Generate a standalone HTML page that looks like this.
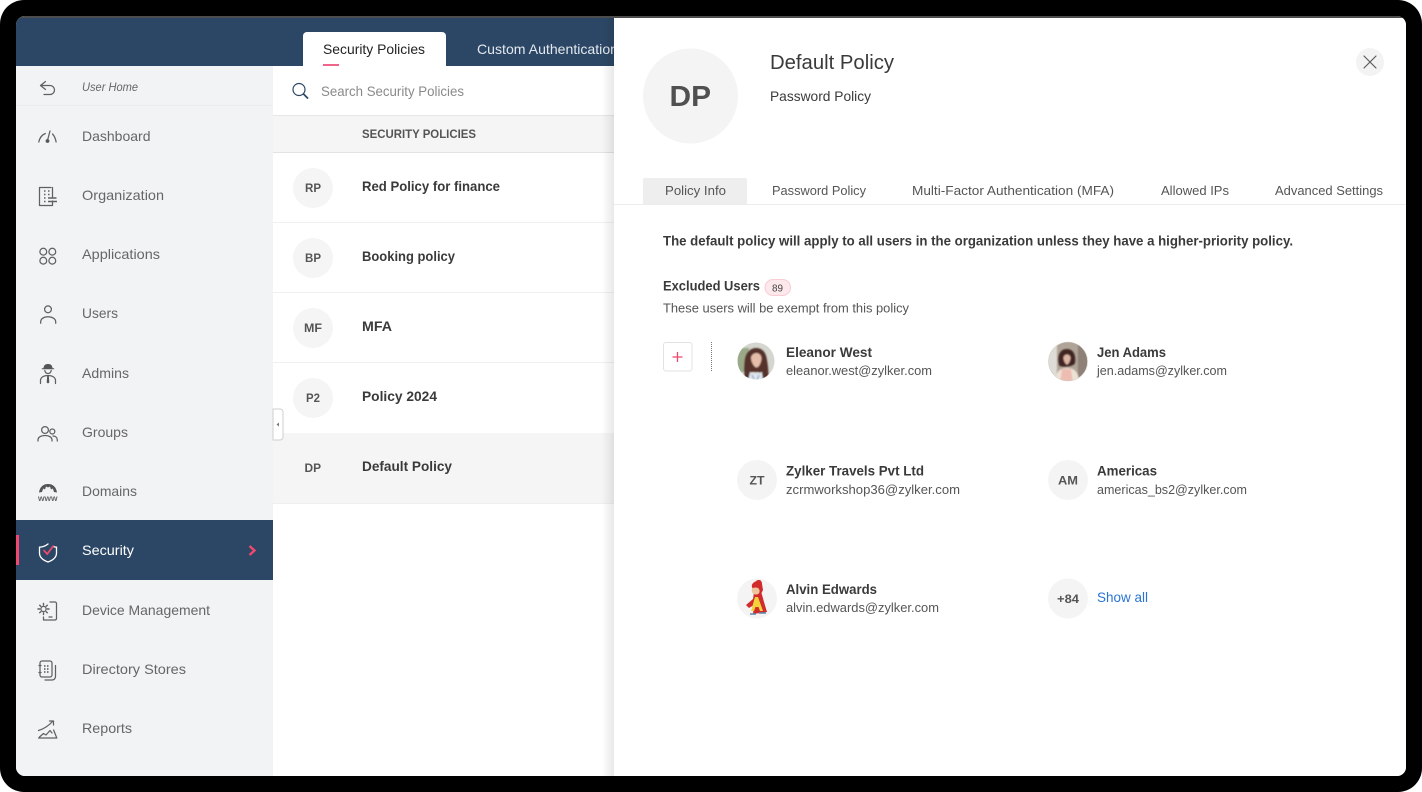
<!DOCTYPE html>
<html lang="en"><head><meta charset="utf-8"><title>Security Policies</title>
<style>
html,body{margin:0;padding:0;background:#fff;width:1422px;height:792px;overflow:hidden}
svg{display:block}
text{font-family:"Liberation Sans",sans-serif;font-size:14px;fill:#666}
.b{font-weight:bold;fill:#3a3a3a}
.ic{fill:none;stroke:#606060;stroke-width:1.250;stroke-linecap:round;stroke-linejoin:round}
.n{fill:#3a3a3a;font-weight:bold}
.m{fill:#555}
</style></head><body>
<svg width="1422" height="792" viewBox="0 0 1422 792" xmlns="http://www.w3.org/2000/svg">
<defs>
<clipPath id="scr"><rect x="16" y="16" width="1390" height="760" rx="9"/></clipPath>
<clipPath id="tabc"><rect x="273" y="18" width="341" height="48"/></clipPath>
<linearGradient id="sh" x1="0" x2="1" y1="0" y2="0"><stop offset="0" stop-color="#000" stop-opacity="0"/><stop offset="1" stop-color="#000" stop-opacity=".09"/></linearGradient>
<clipPath id="a1"><circle cx="756" cy="361" r="18.5"/></clipPath>
<clipPath id="a2"><circle cx="1068" cy="361.500" r="19.500"/></clipPath>
<filter id="bl" x="-20%" y="-20%" width="140%" height="140%"><feGaussianBlur stdDeviation=".7"/></filter>
</defs>
<rect x="0" y="0" width="1422" height="792" rx="24" fill="#000"/>
<g clip-path="url(#scr)">
<rect x="16" y="16" width="1390" height="760" fill="#fff"/>
<rect x="16" y="16" width="1390" height="2" fill="#4c4c4c"/>
<rect x="16" y="18" width="598" height="48" fill="#2c4765"/>
<!-- sidebar -->
<rect x="16" y="66" width="257" height="710" fill="#f1f3f5"/>
<rect x="16" y="105" width="257" height="1" fill="#eaecee"/>
<rect x="16" y="520" width="257" height="60" fill="#2c4765"/>
<rect x="16" y="535" width="3" height="30" fill="#f0486e"/>
<text x="82" y="91" style="font-size:12px;font-style:italic" textLength="56" lengthAdjust="spacingAndGlyphs">User Home</text>
<text x="82" y="141" textLength="68.500" lengthAdjust="spacingAndGlyphs">Dashboard</text>
<text x="82" y="200" textLength="82" lengthAdjust="spacingAndGlyphs">Organization</text>
<text x="82" y="259" textLength="78" lengthAdjust="spacingAndGlyphs">Applications</text>
<text x="82" y="318" textLength="36" lengthAdjust="spacingAndGlyphs">Users</text>
<text x="82" y="378" textLength="47" lengthAdjust="spacingAndGlyphs">Admins</text>
<text x="82" y="437" textLength="46" lengthAdjust="spacingAndGlyphs">Groups</text>
<text x="82" y="496" textLength="55" lengthAdjust="spacingAndGlyphs">Domains</text>
<text x="82" y="555" style="fill:#fff" textLength="52" lengthAdjust="spacingAndGlyphs">Security</text>
<text x="82" y="615" textLength="128" lengthAdjust="spacingAndGlyphs">Device Management</text>
<text x="82" y="674" textLength="104" lengthAdjust="spacingAndGlyphs">Directory Stores</text>
<text x="82" y="733" textLength="50" lengthAdjust="spacingAndGlyphs">Reports</text>
<path d="M249.500 546l5 4.500-5 4.500" fill="none" stroke="#f0486e" stroke-width="2.400"/>
<!-- icons -->
<path class="ic" d="M45.500 81.500l-5 4 5 4M40.500 85.500h9.500a4 4 0 0 1 0 9h-6"/>
<path class="ic" d="M38.800 142c.8-4 3-7 6.500-8.500M52.500 134c1.800 1.800 3 4.500 3.600 8M47.600 140L50 131"/><circle cx="47.500" cy="141" r="1.900" fill="#555"/>
<path class="ic" d="M51 187.500H39.500v18H52.500V201M52.500 187.500V197"/><path d="M44 191h1.500M48 191h1.500M44 194.500h1.500M48 194.500h1.500M44 198h1.500M44 201.500h1.500" stroke="#606060" stroke-width="1.500"/><path d="M48 198h8.500M48 201.500h9" stroke="#606060" stroke-width="1.400"/>
<g class="ic"><circle cx="43.300" cy="251.700" r="3.400"/><circle cx="52.300" cy="251.700" r="3.400"/><circle cx="43.300" cy="260.700" r="3.400"/><circle cx="52.300" cy="260.700" r="3.400"/></g>
<g class="ic"><circle cx="48" cy="309.300" r="3.400"/><path d="M40.700 323.300v-1.500c0-3 3-5 7.300-5s7.700 2 7.700 5v1.500"/></g>
<path d="M43.500 368.200c.3-3 1.800-4.200 4.500-4.200s4.200 1.200 4.500 4.200h1.600v1h-12.300v-1z" fill="#555"/>
<g class="ic"><path d="M44.800 370.500c.4 2 1.600 3 3.200 3s2.800-1 3.200-3M40.500 383.500v-3c0-3 3-5 7.500-5s7.500 2 7.500 5v3"/></g><path d="M47.200 375.500h1.600l.5 7-1.300 1-1.300-1z" fill="#555"/>
<g class="ic"><circle cx="45" cy="430" r="3.400"/><circle cx="52.300" cy="431.500" r="2.500"/><path d="M38 441v-1c0-2.800 3-4.500 7-4.500s7 1.700 7 4.500v1M53 436c2.500 0 4.300 1.500 4.300 4v1"/></g>
<path d="M39 492.500c.8-5.500 4-8.500 9-8.500s8.200 3 9 8.500l-3-.5-1.200-3.500-1.800 1-1-3-2 1-2-1-1 3-1.800-1-1.200 3.500z" fill="#555"/>
<text x="38" y="501" style="font-size:8px;font-weight:bold" textLength="19.500" lengthAdjust="spacingAndGlyphs">www</text>
<path d="M48 544c-2.500 2-5.500 3-8.500 3.200v5.800c0 4.200 3.500 7.200 8.500 9 5-1.800 8.500-4.800 8.500-9v-5.800c-1-.1-2-.3-3-.6" fill="none" stroke="#fff" stroke-width="1.300" stroke-linecap="round"/>
<path d="M44 550.500l3.200 3.500 6-8" fill="none" stroke="#f0486e" stroke-width="1.700" stroke-linecap="round"/>
<g class="ic"><circle cx="43.500" cy="609" r="2.600"/><path d="M43.500 603.500v1.600M43.500 612.900v1.600M38 609h1.600M47.400 609H49M39.700 605.200l1.100 1.100M46.200 611.700l1.100 1.100M39.700 612.800l1.100-1.100M46.200 606.300l1.100-1.100" style="stroke-width:1.400"/><path d="M50 602h5a1.500 1.500 0 0 1 1.500 1.500v15a1.500 1.500 0 0 1-1.500 1.500H43.500v-3M49 617h3"/></g>
<g class="ic"><rect x="40" y="661" width="12" height="16" rx="2"/><path d="M55.500 665.500v11c0 2-1.500 3.500-3.500 3.500h-7"/><path d="M39 665.500h2M39 672.500h2" /></g>
<path d="M44 666h1.500M47 666h1.500M44 669h1.500M47 669h1.500M44 672h1.500M47 672h1.500" stroke="#555" stroke-width="1.500"/>
<g class="ic"><path d="M38.500 730.500c5-1.500 10-4.500 14.500-9.500M49.500 721h4v4M39.500 737l4-3.500 2.500 1.500 4-4.500 2 2.500M38.500 738h18.300l-3.200-8"/></g>
<!-- tabs -->
<g clip-path="url(#tabc)">
<text x="477" y="54" style="fill:#e3e8ee" textLength="141" lengthAdjust="spacingAndGlyphs">Custom Authentication</text>
</g>
<path d="M303 66V36a4 4 0 0 1 4-4h135a4 4 0 0 1 4 4v30z" fill="#fff"/>
<text x="323" y="54" style="fill:#222" textLength="102" lengthAdjust="spacingAndGlyphs">Security Policies</text>
<rect x="323" y="64" width="16" height="2" fill="#f0648a"/>
<!-- list -->
<circle cx="299" cy="89.500" r="6" fill="none" stroke="#2c4765" stroke-width="1.200"/>
<path d="M303.500 94l4 4" stroke="#2c4765" stroke-width="1.800" stroke-linecap="round"/>
<text x="321" y="96" style="fill:#8a8a8a" textLength="143" lengthAdjust="spacingAndGlyphs">Search Security Policies</text>
<rect x="273" y="115" width="341" height="38" fill="#f5f5f5"/>
<rect x="273" y="115" width="341" height="1" fill="#e6e6e6"/>
<rect x="273" y="152" width="341" height="1" fill="#e2e2e2"/>
<text x="362" y="138" class="m" style="font-size:12px;font-weight:bold" textLength="114" lengthAdjust="spacingAndGlyphs">SECURITY POLICIES</text>
<rect x="273" y="222" width="341" height="1" fill="#f0f0f0"/>
<rect x="273" y="292" width="341" height="1" fill="#f0f0f0"/>
<rect x="273" y="362" width="341" height="1" fill="#f0f0f0"/>
<rect x="273" y="433" width="341" height="70" fill="#f5f5f5"/>
<rect x="273" y="503" width="341" height="1" fill="#efefef"/>
<g fill="#f5f5f5"><circle cx="313" cy="188" r="20"/><circle cx="313" cy="258" r="20"/><circle cx="313" cy="328" r="20"/><circle cx="313" cy="398" r="20"/></g>
<text x="305" y="192" class="m" style="font-size:12px;font-weight:bold" textLength="16" lengthAdjust="spacingAndGlyphs">RP</text>
<text x="305" y="262" class="m" style="font-size:12px;font-weight:bold" textLength="16" lengthAdjust="spacingAndGlyphs">BP</text>
<text x="304" y="332" class="m" style="font-size:12px;font-weight:bold" textLength="18" lengthAdjust="spacingAndGlyphs">MF</text>
<text x="306" y="402" class="m" style="font-size:12px;font-weight:bold" textLength="14" lengthAdjust="spacingAndGlyphs">P2</text>
<text x="304.500" y="472" class="m" style="font-size:12px;font-weight:bold" textLength="16.500" lengthAdjust="spacingAndGlyphs">DP</text>
<text x="362" y="191" class="b" textLength="138" lengthAdjust="spacingAndGlyphs">Red Policy for finance</text>
<text x="362" y="261" class="b" textLength="93" lengthAdjust="spacingAndGlyphs">Booking policy</text>
<text x="362" y="331" class="b" textLength="30" lengthAdjust="spacingAndGlyphs">MFA</text>
<text x="362" y="401" class="b" textLength="75" lengthAdjust="spacingAndGlyphs">Policy 2024</text>
<text x="362" y="471" class="b" textLength="90" lengthAdjust="spacingAndGlyphs">Default Policy</text>
<path d="M273 409h7a3 3 0 0 1 3 3v25a3 3 0 0 1-3 3h-7z" fill="#fff" stroke="#cfcfcf"/>
<path d="M279 422.500v4l-2.500-2z" fill="#777"/>
<!-- panel -->
<rect x="602" y="18" width="12" height="758" fill="url(#sh)"/>
<rect x="614" y="18" width="792" height="758" fill="#fff"/>
<circle cx="690.500" cy="96" r="47.500" fill="#f4f4f4"/>
<text x="669.500" y="106" style="font-size:29px;font-weight:bold;fill:#505050" textLength="41.500" lengthAdjust="spacingAndGlyphs">DP</text>
<text x="770" y="69" style="font-size:20px;fill:#3a3a3a" textLength="124" lengthAdjust="spacingAndGlyphs">Default Policy</text>
<text x="770" y="101" style="fill:#3a3a3a" textLength="101" lengthAdjust="spacingAndGlyphs">Password Policy</text>
<circle cx="1370" cy="62" r="14" fill="#f3f3f3"/>
<path d="M1364 56l12 12M1376 56l-12 12" stroke="#5c5c5c" stroke-width="1.200" stroke-linecap="round"/>
<path d="M643 204v-24a2 2 0 0 1 2-2h100a2 2 0 0 1 2 2v24z" fill="#eeeeee"/>
<rect x="614" y="204" width="792" height="1" fill="#ececec"/>
<text x="665" y="195" class="m" style="font-size:13px" textLength="61" lengthAdjust="spacingAndGlyphs">Policy Info</text>
<text x="772" y="195" class="m" style="font-size:13px" textLength="94" lengthAdjust="spacingAndGlyphs">Password Policy</text>
<text x="912" y="195" class="m" style="font-size:13px" textLength="202" lengthAdjust="spacingAndGlyphs">Multi-Factor Authentication (MFA)</text>
<text x="1161" y="195" class="m" style="font-size:13px" textLength="68" lengthAdjust="spacingAndGlyphs">Allowed IPs</text>
<text x="1275" y="195" class="m" style="font-size:13px" textLength="108" lengthAdjust="spacingAndGlyphs">Advanced Settings</text>
<text x="663" y="245.500" class="b" textLength="630" lengthAdjust="spacingAndGlyphs">The default policy will apply to all users in the organization unless they have a higher-priority policy.</text>
<text x="663" y="290.500" class="b" textLength="97" lengthAdjust="spacingAndGlyphs">Excluded Users</text>
<rect x="765" y="279.500" width="25.500" height="16" rx="8" fill="#fde8ec" stroke="#f9ccd6"/>
<text x="772" y="291.500" style="font-size:10px;fill:#444" textLength="11" lengthAdjust="spacingAndGlyphs">89</text>
<text x="663" y="312.500" class="m" style="font-size:13px" textLength="246" lengthAdjust="spacingAndGlyphs">These users will be exempt from this policy</text>
<rect x="663.500" y="342.500" width="28.500" height="28.500" rx="2.500" fill="#fff" stroke="#e2e2e2"/>
<path d="M677.500 352v10M672.500 357h10" stroke="#f0486e" stroke-width="1.300"/>
<path d="M711.500 342v29" stroke="#777" stroke-dasharray="1 1" stroke-width="1"/>
<!-- avatar 1 -->
<g clip-path="url(#a1)">
<rect x="737" y="342" width="38" height="38" fill="#d4d6cf"/>
<rect x="737" y="348" width="12" height="24" fill="#9aaa88" filter="url(#bl)"/>
<g filter="url(#bl)">
<path d="M745 380c-1-6-1-14 0-21 1-7 6-11 11-11 6 0 10 4 11 12 1 6 2 13 1 20h-6l-3-8h-7l-2 8z" fill="#54322a"/>
<path d="M751 358c0-3 3-5 5.500-5s5 2 5 5.500-2.500 9-5 9-5.500-6-5.500-9.500z" fill="#e6bda8"/>
<path d="M748 381l2-9 6 2 6-2 1 9z" fill="#dfe6ef"/>
<path d="M752 375l2 4M759 375l-2 5" stroke="#6f8fb0" stroke-width="1"/>
</g></g>
<!-- avatar 2 -->
<g clip-path="url(#a2)">
<rect x="1048" y="342" width="40" height="40" fill="#b0a397"/>
<rect x="1048" y="342" width="9" height="40" fill="#dfdbd6" filter="url(#bl)"/>
<rect x="1078" y="342" width="10" height="40" fill="#8d8178" filter="url(#bl)"/>
<g filter="url(#bl)">
<path d="M1059 365c-2-8 0-16 8-16 7 0 9 7 8 14-1 4-15 5-16 2z" fill="#3f2824"/>
<path d="M1063.500 358c0-2.500 2-3.500 3.500-3.500s3.500 1 3.500 3.500-2 6.500-3.500 6.500-3.500-4-3.500-6.500z" fill="#deb5a4"/>
<path d="M1055 383c0-9 3-15 12-15s12 6 12 15z" fill="#eee2d6"/>
<path d="M1062 369h9l2 14h-13z" fill="#edbdb2"/>
</g></g>
<circle cx="1068" cy="361.500" r="19.500" fill="none" stroke="#d5cfca" stroke-width=".6"/>
<!-- initials -->
<g fill="#f4f4f4"><circle cx="757" cy="480" r="20"/><circle cx="1068" cy="480" r="20"/><circle cx="1068" cy="598.500" r="20"/><circle cx="757" cy="598.500" r="20"/></g>
<text x="749.500" y="484.500" class="m" style="font-size:12px;font-weight:bold" textLength="15" lengthAdjust="spacingAndGlyphs">ZT</text>
<text x="1058" y="484.500" class="m" style="font-size:12px;font-weight:bold" textLength="20" lengthAdjust="spacingAndGlyphs">AM</text>
<text x="1057" y="603" class="m" style="font-size:12px;font-weight:bold" textLength="22" lengthAdjust="spacingAndGlyphs">+84</text>
<!-- chipmunk -->
<g>
<path d="M756 581c3-2 6-1 6 3l1 6-1.500 3 2.500 9 3 10-14 2 1-9-5 3-3-3 7-6 1-7-2-5c-1-3 2-5 4.500-6z" fill="#d22b2b"/>
<path d="M752 589c1-2 6-2 7 0s1 5-2.500 5.500-5.500-2.500-4.500-5.500z" fill="#eec69b"/>
<path d="M755 597l3 0 5 14-3 0-1.500-4h-3l-1.500 4-3 0z" fill="#f2d33c"/>
<path d="M750 614h6M759 613h7" stroke="#5d87b0" stroke-width="1.500"/>
</g>
<!-- names -->
<text x="786" y="357" class="n" textLength="86" lengthAdjust="spacingAndGlyphs">Eleanor West</text>
<text x="786" y="375" class="m" style="font-size:13px" textLength="146" lengthAdjust="spacingAndGlyphs">eleanor.west@zylker.com</text>
<text x="1097" y="357" class="n" textLength="69" lengthAdjust="spacingAndGlyphs">Jen Adams</text>
<text x="1097" y="375" class="m" style="font-size:13px" textLength="130" lengthAdjust="spacingAndGlyphs">jen.adams@zylker.com</text>
<text x="786" y="475.500" class="n" textLength="138" lengthAdjust="spacingAndGlyphs">Zylker Travels Pvt Ltd</text>
<text x="786" y="494" class="m" style="font-size:13px" textLength="174" lengthAdjust="spacingAndGlyphs">zcrmworkshop36@zylker.com</text>
<text x="1097" y="475.500" class="n" textLength="60" lengthAdjust="spacingAndGlyphs">Americas</text>
<text x="1097" y="494" class="m" style="font-size:13px" textLength="150" lengthAdjust="spacingAndGlyphs">americas_bs2@zylker.com</text>
<text x="786" y="594" class="n" textLength="91" lengthAdjust="spacingAndGlyphs">Alvin Edwards</text>
<text x="786" y="612" class="m" style="font-size:13px" textLength="153" lengthAdjust="spacingAndGlyphs">alvin.edwards@zylker.com</text>
<text x="1097" y="602" style="fill:#2a74d4" textLength="51" lengthAdjust="spacingAndGlyphs">Show all</text>
</g>
</svg>
</body></html>
